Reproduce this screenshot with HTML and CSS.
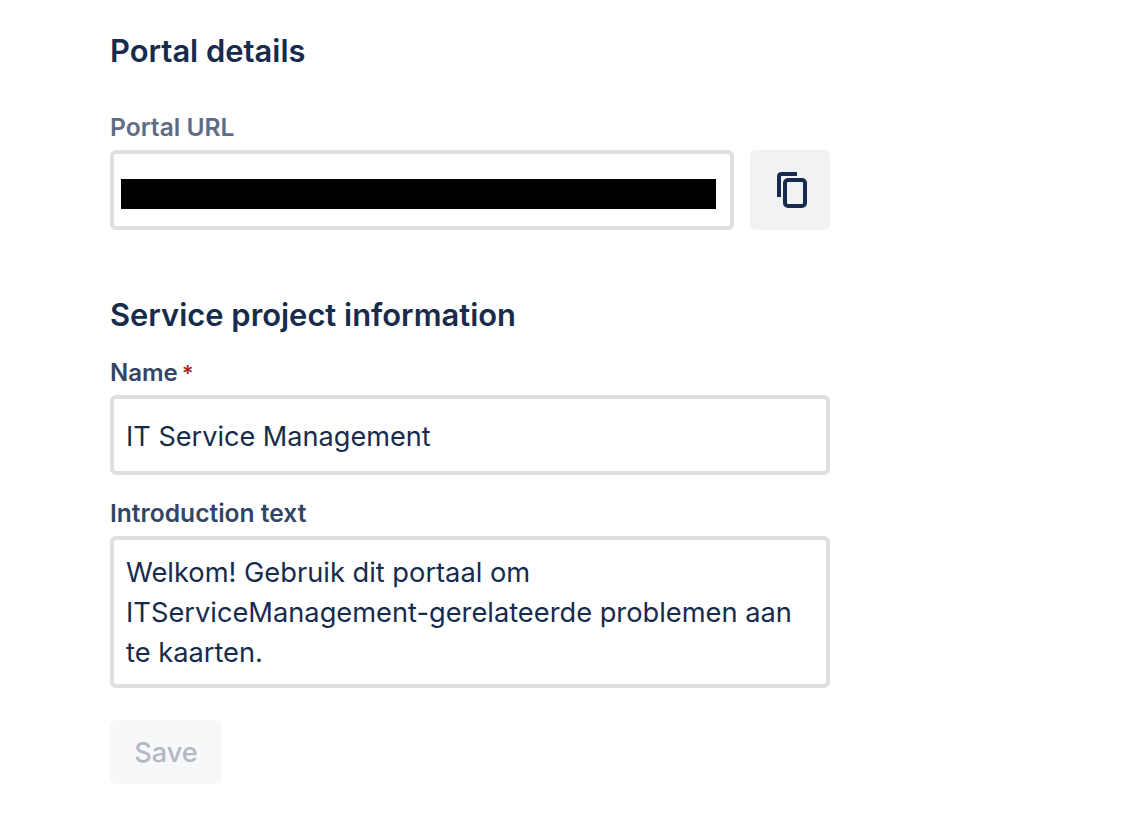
FILE: index.html
```html
<!DOCTYPE html>
<html lang="en">
<head>
  <meta charset="utf-8" />
  <title>Portal details</title>
  <link rel="stylesheet" href="styles.css">
</head>
<body>
  <main class="container">
    <h2 class="title title-first">Portal details</h2>
    <div class="label label-muted">Portal URL</div>
    <div class="url-row">
      <div class="field url-field"><div class="redacted"></div></div>
      <button class="copy-btn" type="button" aria-label="Copy">
        <svg width="30" height="36" viewBox="0 0 30 36" fill="none" stroke="#172b4d" stroke-width="4">
          <path d="M2 25V4.500Q2 2 4.500 2H20"/>
          <rect x="8" y="8" width="20" height="26" rx="3"/>
        </svg>
      </button>
    </div>
    <h2 class="title title-second">Service project information</h2>
    <div class="label label-name">Name<span class="req">*</span></div>
    <div class="field text-field">IT Service Management</div>
    <div class="label label-intro">Introduction text</div>
    <div class="field area-field">Welkom! Gebruik dit portaal om ITServiceManagement-gerelateerde problemen aan te kaarten.</div>
    <button class="save-btn" type="button" disabled>Save</button>
  </main>
</body>
</html>
```

FILE: styles.css
```css
body{margin:0;background:#fff;color:#172b4d;font-family:Inter,"Liberation Sans",sans-serif}
.container{width:720px;padding:0 0 32px 110px}
.title{margin:0;font-size:30.900px;line-height:40px;font-weight:600;color:#172b4d}
.title-first{padding-top:31px}
.title-second{margin-top:65px}
.label{height:23px;line-height:23px;font-size:24.600px;font-weight:600;color:#344563}
.label-muted{margin-top:45px;color:#5e6c84}
.label-name{margin-top:26px;font-size:24px}
.label-intro{margin-top:27px}
.req{margin-left:4px;color:#a5281b;font-size:22px}
.field{box-sizing:border-box;border:4px solid #dedfe3;border-radius:6px;background:#fff;font-size:27.100px;line-height:40px;color:#172b4d}
.url-row{display:flex;gap:16px;margin-top:11px}
.url-field{flex:1;height:80px;padding:25px 14px 0 7px}
.redacted{height:30px;background:#000}
.copy-btn{box-sizing:border-box;width:80px;height:80px;padding:0 0 0 4px;border:0;border-radius:6px;background:#f1f2f4;display:flex;align-items:center;justify-content:center}
.text-field{height:80px;margin-top:11px;padding:18px 12px}
.area-field{height:152px;margin-top:11px;padding:13px 12px;font-size:27.250px}
.save-btn{display:block;width:112px;height:64px;margin-top:32px;padding:0;border:0;border-radius:6px;background:#f7f8f9;color:#b3b9c4;font:500 27.200px Inter,"Liberation Sans",sans-serif}
```
